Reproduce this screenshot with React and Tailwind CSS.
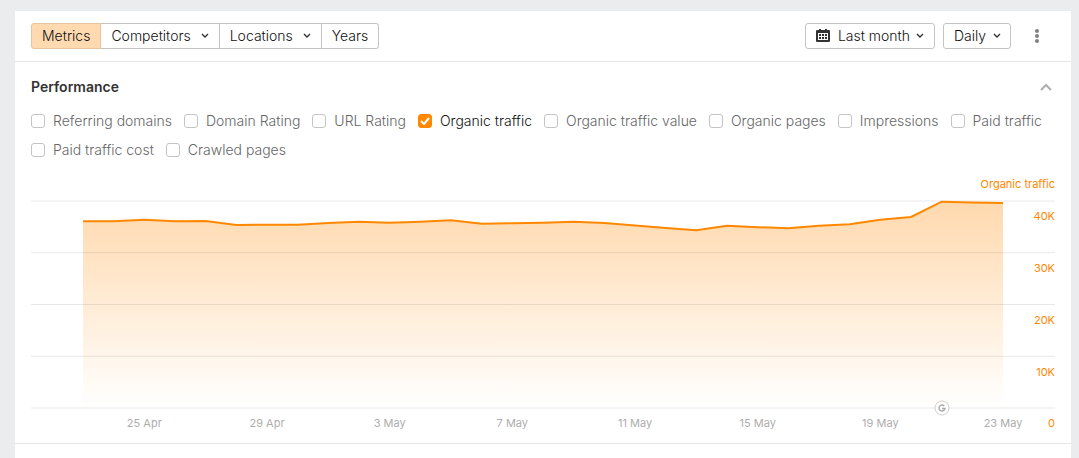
import { useState } from 'react';
import clsx from 'clsx';

const metrics = [
  'Referring domains',
  'Domain Rating',
  'URL Rating',
  'Organic traffic',
  'Organic traffic value',
  'Organic pages',
  'Impressions',
  'Paid traffic',
  'Paid traffic cost',
  'Crawled pages',
];

const tabs = [
  { label: 'Metrics' },
  { label: 'Competitors', menu: true },
  { label: 'Locations', menu: true },
  { label: 'Years' },
];

// Daily organic traffic, 23 Apr - 23 May
const traffic = [
  36080, 36080, 36390, 36080, 36130, 35360, 35420, 35420, 35770, 36000, 35800, 36000, 36290, 35610, 35710, 35800,
  36000, 35750, 35270, 34780, 34340, 35230, 34940, 34720, 35230, 35500, 36390, 36910, 39860, 39710, 39610,
];

const dateTicks = [
  { day: 2, label: '25 Apr' },
  { day: 6, label: '29 Apr' },
  { day: 10, label: '3 May' },
  { day: 14, label: '7 May' },
  { day: 18, label: '11 May' },
  { day: 22, label: '15 May' },
  { day: 26, label: '19 May' },
  { day: 30, label: '23 May' },
];

const GOOGLE_UPDATE_DAY = 28;
const WIDTH = 1024;
const HEIGHT = 208;
const INSET = 52;
const MAX = 40000;

const xOf = (day) => INSET + (day / (traffic.length - 1)) * (WIDTH - INSET * 2);
const yOf = (value) => HEIGHT - (value / MAX) * (HEIGHT - 1);
const leftOf = (day) => `${(xOf(day) / WIDTH) * 100}%`;

function Chevron() {
  return (
    <svg viewBox="0 0 8 6" className="h-[6px] w-2 shrink-0" fill="none" stroke="#333" strokeWidth="1.4">
      <path d="M1 1l3 3 3-3" />
    </svg>
  );
}

function CalendarIcon() {
  return (
    <svg viewBox="0 0 14 14" className="h-[14px] w-[14px] shrink-0 text-[#333]">
      <path fill="currentColor" d="M3 0h2v1h4V0h2v1h2a1 1 0 0 1 1 1v10a1 1 0 0 1-1 1H1a1 1 0 0 1-1-1V2a1 1 0 0 1 1-1h2z" />
      <path fill="#fff" d="M2 4h10v7H2z" />
      <path
        fill="currentColor"
        d="M3 5h2v2H3zM6 5h2v2H6zM9 5h2v2H9zM3 8h2v2H3zM6 8h2v2H6zM9 8h2v2H9z"
      />
    </svg>
  );
}

function MetricCheckbox({ label, checked, onChange }) {
  return (
    <label className={clsx('flex items-center gap-2 leading-5', checked ? 'text-[#111]' : 'text-[#666]')}>
      <span className="grid h-[14px] w-[14px] place-items-center">
        <input
          type="checkbox"
          checked={checked}
          onChange={onChange}
          className="col-start-1 row-start-1 h-[14px] w-[14px] appearance-none rounded-[3px] border border-[#c4c4c4] bg-white checked:border-[#ff8800] checked:bg-[#ff8800]"
        />
        {checked && (
          <svg
            viewBox="0 0 10 8"
            className="pointer-events-none col-start-1 row-start-1 h-2 w-[10px]"
            fill="none"
            stroke="#fff"
            strokeWidth="2"
          >
            <path d="M1 4l3 3 5-6" />
          </svg>
        )}
      </span>
      {label}
    </label>
  );
}

function TrafficChart() {
  const points = traffic.map((value, day) => `${xOf(day)},${yOf(value)}`).join(' ');

  return (
    <div className="text-[11px] leading-4 font-normal">
      <div className="mb-2 text-right text-[#ff8800]">Organic traffic</div>

      <div className="relative grid">
        <svg
          viewBox={`0 0 ${WIDTH} ${HEIGHT}`}
          preserveAspectRatio="none"
          className="col-start-1 row-start-1 h-[208px] w-full overflow-visible"
          role="img"
          aria-label="Organic traffic by day"
        >
          <defs>
            <linearGradient id="trafficFill" x1="0" y1="0" x2="0" y2="1">
              <stop offset="0" stopColor="#ff8800" stopOpacity="0.32" />
              <stop offset="1" stopColor="#ff8800" stopOpacity="0" />
            </linearGradient>
          </defs>
          <polygon
            points={`${xOf(0)},${HEIGHT} ${points} ${xOf(traffic.length - 1)},${HEIGHT}`}
            fill="url(#trafficFill)"
          />
          <g stroke="#000" strokeOpacity="0.09">
            {[0, 10000, 20000, 30000, 40000].map((value) => (
              <line
                key={value}
                x1="0"
                x2={WIDTH}
                y1={yOf(value)}
                y2={yOf(value)}
                vectorEffect="non-scaling-stroke"
              />
            ))}
          </g>
          <polyline points={points} fill="none" stroke="#ff8800" strokeWidth="2" vectorEffect="non-scaling-stroke" />
        </svg>

        <div className="col-start-1 row-start-1 grid grid-rows-4 text-right text-[#ff8800]">
          <span className="pt-2">40K</span>
          <span className="pt-2">30K</span>
          <span className="pt-2">20K</span>
          <span className="pt-2">10K</span>
        </div>

        <button
          aria-label="Google update"
          style={{ left: leftOf(GOOGLE_UPDATE_DAY) }}
          className="absolute -bottom-2 -translate-x-1/2 text-[#adadad]"
        >
          <svg viewBox="0 0 16 16" className="h-4 w-4" fill="none" stroke="currentColor">
            <circle cx="8" cy="8" r="7" fill="#fff" stroke="#cfcfcf" />
            <path d="M10.3 6.1A3 3 0 1 0 11 8.4H8" strokeWidth="1.5" />
          </svg>
        </button>
      </div>

      <div className="relative mt-[7px] text-right text-[#ff8800]">
        {dateTicks.map((tick) => (
          <span
            key={tick.label}
            style={{ left: leftOf(tick.day) }}
            className="absolute -translate-x-1/2 whitespace-nowrap text-[#adadad]"
          >
            {tick.label}
          </span>
        ))}
        0
      </div>
    </div>
  );
}

export default function App() {
  const [activeTab, setActiveTab] = useState('Metrics');
  const [selected, setSelected] = useState(['Organic traffic']);
  const [period, setPeriod] = useState('Daily');
  const [isOpen, setIsOpen] = useState(true);

  const toggleMetric = (label) =>
    setSelected((prev) => (prev.includes(label) ? prev.filter((m) => m !== label) : [...prev, label]));

  return (
    <div className="flex min-h-screen bg-[#ebecee] pt-[11px] pr-2 pl-[15px] font-['Inter',sans-serif] text-sm font-light text-[#111]">
      <main className="min-w-0 flex-1 bg-white">
        {/* Toolbar */}
        <header className="flex flex-wrap items-center justify-between gap-2 border-b border-[#e6e6e6] px-4 py-3">
          <div className="flex">
            {tabs.map((tab) => (
              <button
                key={tab.label}
                onClick={() => setActiveTab(tab.label)}
                aria-haspopup={tab.menu ? 'menu' : undefined}
                className={clsx(
                  'flex h-[26px] items-center gap-[10px] border border-l-0 border-[#c4c4c4] px-[10px] first:rounded-l-[3px] first:border-l last:rounded-r-[3px]',
                  activeTab === tab.label && 'border-[#e8c39b] bg-[#ffd9b0]'
                )}
              >
                {tab.label}
                {tab.menu && <Chevron />}
              </button>
            ))}
          </div>

          <div className="flex items-center gap-2">
            <button
              aria-haspopup="dialog"
              className="flex h-[26px] items-center rounded-[3px] border border-[#c4c4c4] px-[10px]"
            >
              <CalendarIcon />
              <span className="mr-[6px] ml-2">Last month</span>
              <Chevron />
            </button>
            <div className="grid items-center">
              <select
                aria-label="Period"
                value={period}
                onChange={(e) => setPeriod(e.target.value)}
                className="col-start-1 row-start-1 h-[26px] w-[68px] appearance-none rounded-[3px] border border-[#c4c4c4] bg-white pl-[10px]"
              >
                <option>Daily</option>
                <option>Weekly</option>
                <option>Monthly</option>
              </select>
              <span className="pointer-events-none col-start-1 row-start-1 mr-[10px] justify-self-end">
                <Chevron />
              </span>
            </div>
            <button aria-label="More" className="flex h-[26px] w-9 items-center justify-center text-[#808080]">
              <svg viewBox="0 0 4 14" className="h-[14px] w-1" fill="currentColor">
                <circle cx="2" cy="2" r="2" />
                <circle cx="2" cy="7" r="2" />
                <circle cx="2" cy="12" r="2" />
              </svg>
            </button>
          </div>
        </header>

        {/* Performance */}
        <section className="border-b border-[#e6e6e6] px-4 pt-[15px] pb-3">
          <div className="flex items-center justify-between pr-[3px]">
            <h2 className="leading-5 font-semibold text-[#333]">Performance</h2>
            <button aria-label="Toggle performance" aria-expanded={isOpen} onClick={() => setIsOpen(!isOpen)}>
              <svg viewBox="0 0 12 8" className="h-2 w-3" fill="none" stroke="#adadad" strokeWidth="2">
                <path d="M1 7l5-5 5 5" />
              </svg>
            </button>
          </div>

          {isOpen && (
            <>
              <div className="mt-[14px] mb-4 flex flex-wrap gap-x-3 gap-y-[9px]">
                {metrics.map((label) => (
                  <MetricCheckbox
                    key={label}
                    label={label}
                    checked={selected.includes(label)}
                    onChange={() => toggleMetric(label)}
                  />
                ))}
              </div>
              <TrafficChart />
            </>
          )}
        </section>
      </main>
    </div>
  );
}
